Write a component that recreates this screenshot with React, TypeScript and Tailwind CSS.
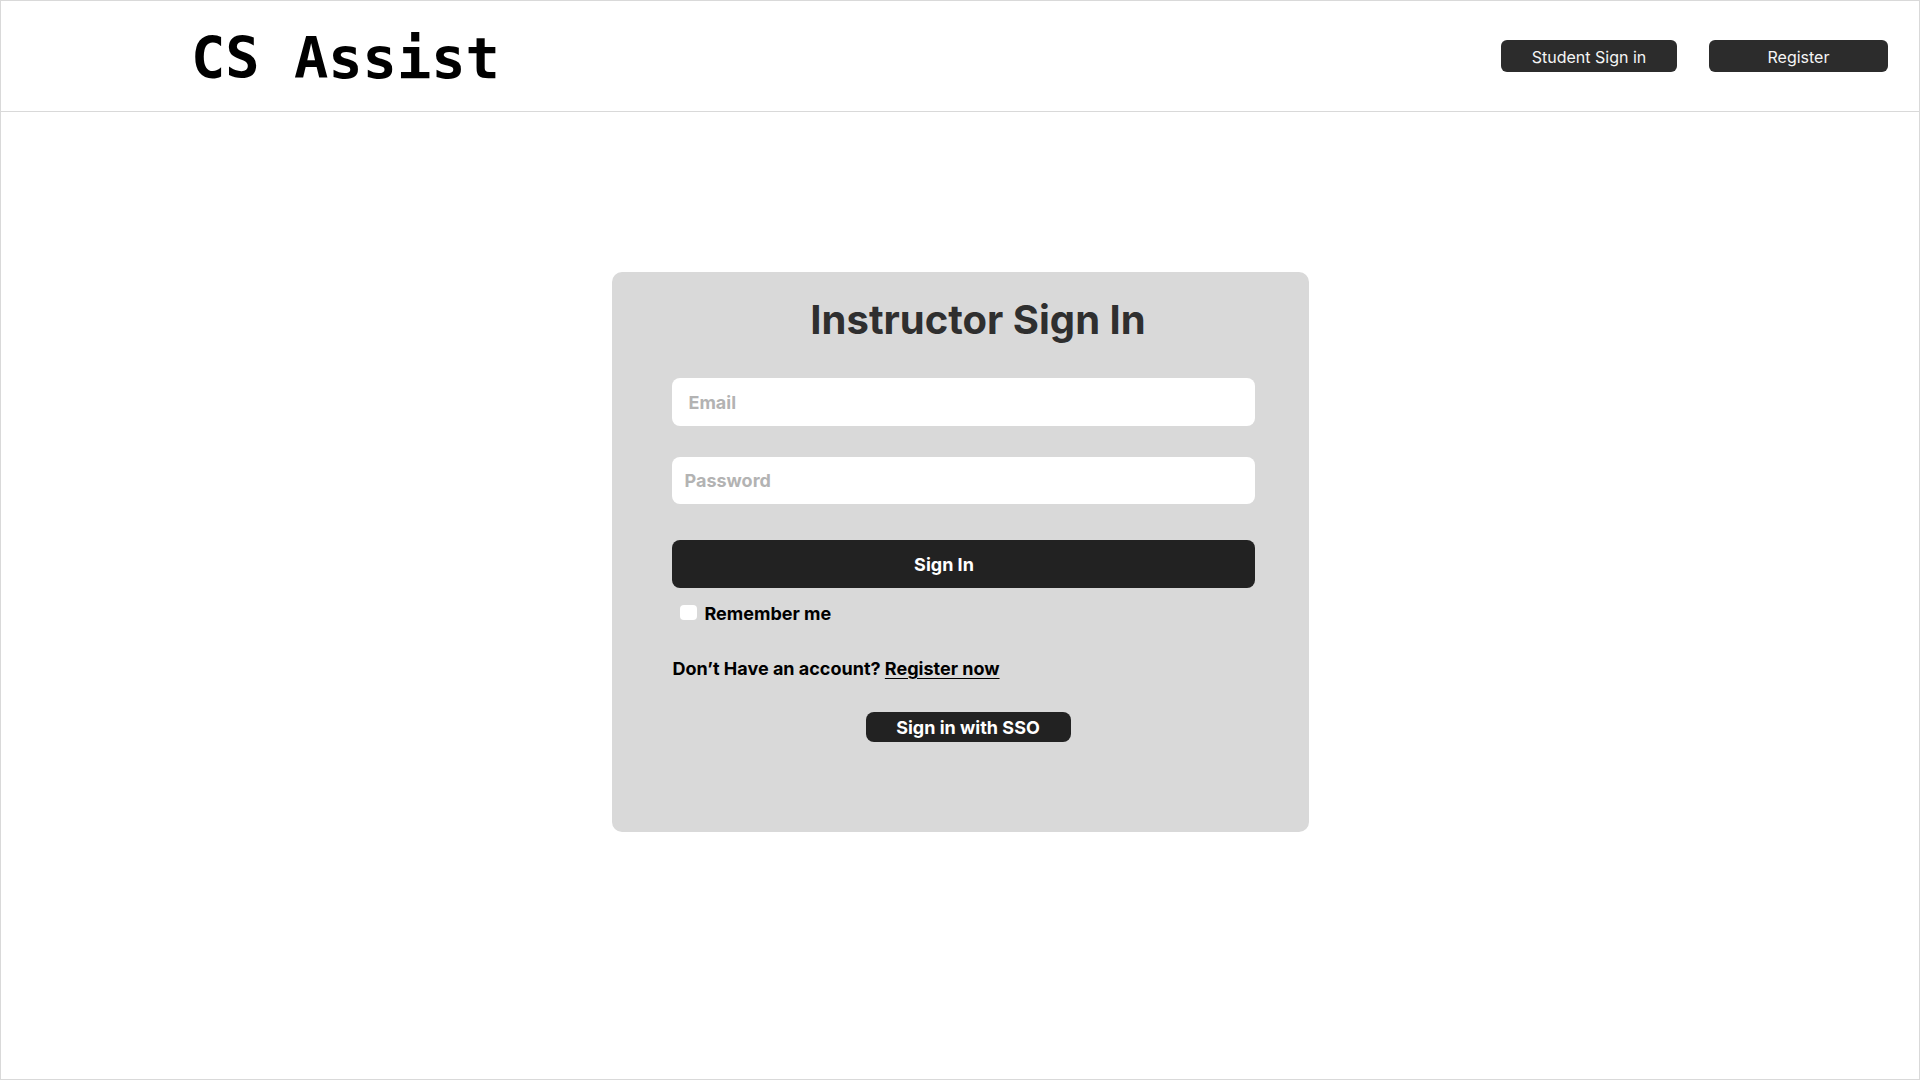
export default function App() {
  return (
    <div
      className="h-[1080px] w-[1920px] border border-[#d9d9d9] bg-white flex flex-col"
      style={{ fontFamily: "Inter, 'Noto Sans', sans-serif" }}
    >
      <header className="h-[111px] shrink-0 border-b border-[#d9d9d9] flex items-center justify-between pl-[190px] pr-[31px]">
        <h1
          className="text-[57px] leading-none font-bold text-black mt-[5px]"
          style={{ fontFamily: "'DejaVu Sans Mono', 'Liberation Mono', monospace" }}
        >
          CS Assist
        </h1>
        <nav className="flex items-center gap-8">
          <button className="w-[176px] h-[32px] rounded-md bg-[#2c2c2c] text-[#f5f5f5] text-[16px] pt-[2px]">
            Student Sign in
          </button>
          <button className="w-[179px] h-[32px] rounded-md bg-[#2c2c2c] text-[#f5f5f5] text-[16px] pt-[2px]">
            Register
          </button>
        </nav>
      </header>

      <main className="flex justify-center pt-[160px]">
        <div className="w-[697px] h-[560px] rounded-[10px] bg-[#d9d9d9] pt-[24px] pl-[60px] pr-[54px]">
          <h2 className="text-[40px] leading-[48px] font-bold text-[#2f2f2f] text-center pl-[30px]">
            Instructor Sign In
          </h2>

          <div className="mt-[34px] flex flex-col gap-[31px]">
            <input
              type="email"
              placeholder="Email"
              className="h-[48px] w-full rounded-lg bg-white pl-[17px] text-[18px] font-bold text-black placeholder:text-[#b3b3b3] outline-none"
            />
            <input
              type="password"
              placeholder="Password"
              className="h-[47px] w-full rounded-lg bg-white pl-[13px] text-[18px] font-bold text-black placeholder:text-[#b3b3b3] outline-none"
            />
          </div>

          <button className="mt-[36px] h-[48px] w-full rounded-lg bg-[#222222] text-white text-[18px] font-bold pr-[38px]">
            Sign In
          </button>

          <label className="mt-[14px] flex items-center gap-[8px] pl-[8px] text-[18px] leading-6 font-bold text-black">
            <span className="w-[17px] h-[15px] rounded-[4px] bg-white -mt-[3px]" />
            Remember me
          </label>

          <p className="mt-[31px] text-[18px] leading-6 font-bold text-black pl-[1px]">
            Don’t Have an account?{" "}
            <a className="underline underline-offset-[3px]">Register now</a>
          </p>

          <div className="mt-[31px] flex justify-center pl-[10px]">
            <button className="w-[205px] h-[30px] rounded-lg bg-[#222222] text-white text-[18px] font-bold">
              Sign in with SSO
            </button>
          </div>
        </div>
      </main>
    </div>
  );
}
